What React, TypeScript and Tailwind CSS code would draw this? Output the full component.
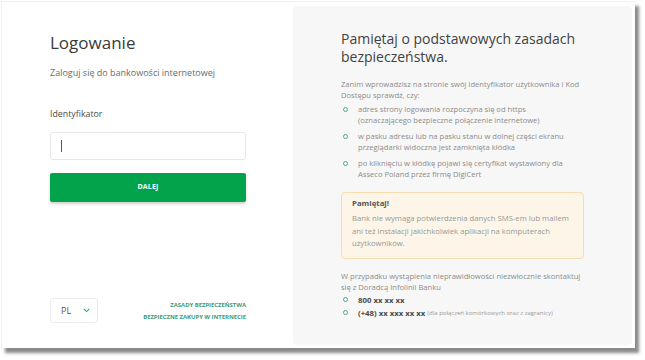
import React from "react";

const font = { fontFamily: '"Open Sans", "Noto Sans", sans-serif' };

function Bullet() {
  return <span className="mt-[3px] ml-[2px] mr-[10px] h-[5px] w-[5px] shrink-0 rounded-full border border-[#52a98c]" />;
}

export default function App() {
  return (
    <div className="h-[360px] w-[645px] bg-white" style={font}>
      <div className="ml-[1px] mt-[1px] flex h-[347px] w-[634px] border-l border-t border-[#f0f0f0] bg-white shadow-[4px_5px_3px_#8a8a8a]">
        <div className="flex w-[291px] flex-col pb-[25px] pl-[48px] pr-[47px] pt-[31px]">
          <h1 className="text-[17px] leading-[20px] text-[#3a3a3a]">Logowanie</h1>
          <p className="mt-[14px] text-[9px] leading-[12px] text-[#6b6b6b]">Zaloguj się do bankowości internetowej</p>
          <label className="mt-[29px] text-[8.8px] leading-[12px] text-[#4a4a4a]">Identyfikator</label>
          <div className="mt-[12px] flex h-[28px] items-center rounded-[3px] border border-[#e6e6e6] bg-white pl-[10px]">
            <span className="h-[12px] w-[1px] bg-[#555]" />
          </div>
          <button className="mt-[13px] h-[29px] rounded-[2px] bg-[#02a34a] text-[7px] font-bold tracking-[0.2px] text-white shadow-[0_2px_3px_rgba(0,0,0,0.18)]">
            DALEJ
          </button>
          <div className="flex-1" />
          <div className="flex items-center justify-between">
            <div className="flex h-[25px] w-[48px] items-center justify-between rounded-[3px] border border-[#ececec] pl-[10px] pr-[7px]">
              <span className="text-[9px] text-[#555]">PL</span>
              <svg width="7" height="5" viewBox="0 0 7 5">
                <path d="M0.8 1 L3.5 3.6 L6.2 1" fill="none" stroke="#3aa776" strokeWidth="1.1" />
              </svg>
            </div>
            <div className="flex flex-col items-end gap-[4px] text-[5.9px] font-bold leading-[8px] text-[#3b9c7b]">
              <span>ZASADY BEZPIECZEŃSTWA</span>
              <span>BEZPIECZNE ZAKUPY W INTERNECIE</span>
            </div>
          </div>
        </div>
        <div className="mb-[3px] mr-[3px] mt-[4px] flex-1 rounded-[4px] bg-[#f7f7f7] pl-[48px] pr-[40px] pt-[24px]">
          <h2 className="text-[14px] leading-[18px] text-[#424242]">
            Pamiętaj o podstawowych zasadach
            <br />
            bezpieczeństwa.
          </h2>
          <p className="mt-[13px] text-[7.6px] leading-[10.5px] text-[#8c8c8c]">
            Zanim wprowadzisz na stronie swój Identyfikator użytkownika i Kod
            <br />
            Dostępu sprawdź, czy:
          </p>
          <ul className="mt-[4px] flex flex-col gap-[6px] text-[7.6px] leading-[10.5px] text-[#8c8c8c]">
            <li className="flex">
              <Bullet />
              <span>
                adres strony logowania rozpoczyna się od https
                <br />
                (oznaczającego bezpieczne połączenie internetowe)
              </span>
            </li>
            <li className="flex">
              <Bullet />
              <span>
                w pasku adresu lub na pasku stanu w dolnej części ekranu
                <br />
                przeglądarki widoczna jest zamknięta kłódka
              </span>
            </li>
            <li className="flex">
              <Bullet />
              <span>
                po kliknięciu w kłódkę pojawi się certyfikat wystawiony dla
                <br />
                Asseco Poland przez firmę DigiCert
              </span>
            </li>
          </ul>
          <div className="mt-[13px] w-[243px] rounded-[4px] border border-[#f6dcae] bg-[#fdf6e8] pb-[8px] pl-[10px] pt-[4px]">
            <div className="text-[7.8px] font-bold leading-[12px] text-[#555]">Pamiętaj!</div>
            <p className="mt-[3px] text-[7.7px] leading-[12.5px] text-[#979797]">
              Bank nie wymaga potwierdzenia danych SMS-em lub mailem
              <br />
              ani też instalacji jakichkolwiek aplikacji na komputerach
              <br />
              użytkowników.
            </p>
          </div>
          <p className="mt-[12px] text-[7.6px] leading-[11px] text-[#8c8c8c]">
            W przypadku wystąpienia nieprawidłowości niezwłocznie skontaktuj
            <br />
            się z Doradcą Infolinii Banku
          </p>
          <ul className="mt-[1px] flex flex-col gap-[1px] leading-[12px]">
            <li className="flex items-center">
              <span className="ml-[2px] mr-[10px] h-[5px] w-[5px] shrink-0 rounded-full border border-[#52a98c]" />
              <span className="text-[7.8px] font-bold text-[#4a4a4a]">800 xx xx xx</span>
            </li>
            <li className="flex items-center">
              <span className="ml-[2px] mr-[10px] h-[5px] w-[5px] shrink-0 rounded-full border border-[#52a98c]" />
              <span className="text-[7.8px] font-bold text-[#4a4a4a]">(+48) xx xxx xx xx</span>
              <span className="ml-[2px] text-[6px] text-[#9a9a9a]">(dla połączeń komórkowych oraz z zagranicy)</span>
            </li>
          </ul>
        </div>
      </div>
    </div>
  );
}
